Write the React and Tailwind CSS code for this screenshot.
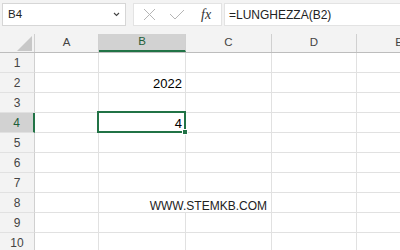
import React from 'react';

const cols = ['A', 'B', 'C', 'D', 'E'];
const colW = ['w-[64px]', 'w-[87px]', 'w-[86px]', 'w-[85px]', 'w-[85px]'];
const rows = [1, 2, 3, 4, 5, 6, 7, 8, 9, 10];

const cellValue = (r, c) => {
    if (r === 2 && c === 'B') return '2022';
    if (r === 4 && c === 'B') return '4';
    return null;
};

function Cell({ r, c, i }) {
    const value = cellValue(r, c);
    // row 8: the url spills from C into B, so no B|C gridline there
    const noRight = r === 8 && c === 'B';
    return (
        <div
            className={`${colW[i]} h-full shrink-0 relative border-b border-[#e1e1e1] ${noRight ? '' : 'border-r'} border-r-[#e1e1e1] flex items-center justify-end pr-[3px] pt-[2px] text-[13px] text-black`}
        >
            {value}
            {r === 8 && c === 'C' && (
                <span className="absolute right-[4px] top-[4px] whitespace-nowrap text-[12px] text-[#222]">WWW.STEMKB.COM</span>
            )}
        </div>
    );
}

export default function App() {
    return (
        <div className="w-[400px] h-[250px] overflow-hidden bg-white font-['Liberation_Sans',Arial,sans-serif]">
            {/* formula bar */}
            <div className="h-[34px] bg-[#f3f3f3] flex items-start pt-[3px] pl-[2px]">
                <div className="w-[124px] h-[23px] bg-white border border-[#d6d6d6] flex items-center justify-between pl-[5px] pr-[5px] text-[11.5px] text-[#222]">
                    <span>B4</span>
                    <svg width="7" height="5" viewBox="0 0 7 5">
                        <path d="M1 1 L3.5 3.5 L6 1" fill="none" stroke="#444" strokeWidth="1.1" />
                    </svg>
                </div>
                <div className="ml-[7px] w-[89px] h-[23px] bg-white border border-[#e3e3e3] flex items-center pl-[9px]">
                    <svg width="13" height="13" viewBox="0 0 13 13">
                        <path d="M1 1 L12 12 M12 1 L1 12" stroke="#b5b5b5" strokeWidth="1" />
                    </svg>
                    <svg className="ml-[13px]" width="16" height="11" viewBox="0 0 16 11">
                        <path d="M1 5 L6 10 L15 1" fill="none" stroke="#b5b5b5" strokeWidth="1" />
                    </svg>
                    <span className="ml-[16px] font-['Liberation_Serif',serif] italic text-[14px] text-[#333] leading-none">fx</span>
                </div>
                <div className="ml-[2px] flex-1 h-[23px] bg-white border border-[#e3e3e3] border-r-0 flex items-center pl-[4px] text-[12px] text-[#222]">
                    =LUNGHEZZA(B2)
                </div>
            </div>

            {/* grid */}
            <div className="relative">
                <div className="flex h-[19px] bg-[#f3f3f3] border-b border-[#bdbdbd]">
                    <div className="w-[35px] shrink-0 border-r border-[#d0d0d0] relative">
                        <svg className="absolute left-[17px] top-[2px]" width="15" height="15" viewBox="0 0 15 15">
                            <path d="M15 0 L15 15 L0 15 Z" fill="#c8c8c8" />
                        </svg>
                    </div>
                    {cols.map((c, i) => (
                        <div
                            key={c}
                            className={`${colW[i]} shrink-0 h-full flex items-center justify-center text-[11.5px] border-r border-[#d0d0d0] ${c === 'B' ? 'bg-[#d2d2d2] text-[#1d5e38] border-b-2 border-b-[#217346]' : 'text-[#444]'}`}
                        >
                            {c}
                        </div>
                    ))}
                </div>

                {rows.map((r) => (
                    <div key={r} className="flex h-[20px]">
                        <div
                            className={`w-[35px] shrink-0 h-full flex items-center justify-center text-[12px] border-b border-[#e1e1e1] ${r === 4 ? 'bg-[#d2d2d2] text-[#1d5e38] border-r-2 border-r-[#217346]' : 'bg-[#f3f3f3] text-[#444] border-r border-r-[#d0d0d0]'}`}
                        >
                            {r}
                        </div>
                        {cols.map((c, i) => (
                            <Cell key={c} r={r} c={c} i={i} />
                        ))}
                    </div>
                ))}

                {/* active cell B4 */}
                <div className="absolute left-[97px] top-[77px] w-[89px] h-[22px] border-2 border-[#217346] pointer-events-none">
                    <div className="absolute -right-[4px] -bottom-[4px] w-[6px] h-[6px] bg-[#217346] border border-white" />
                </div>
            </div>
        </div>
    );
}
